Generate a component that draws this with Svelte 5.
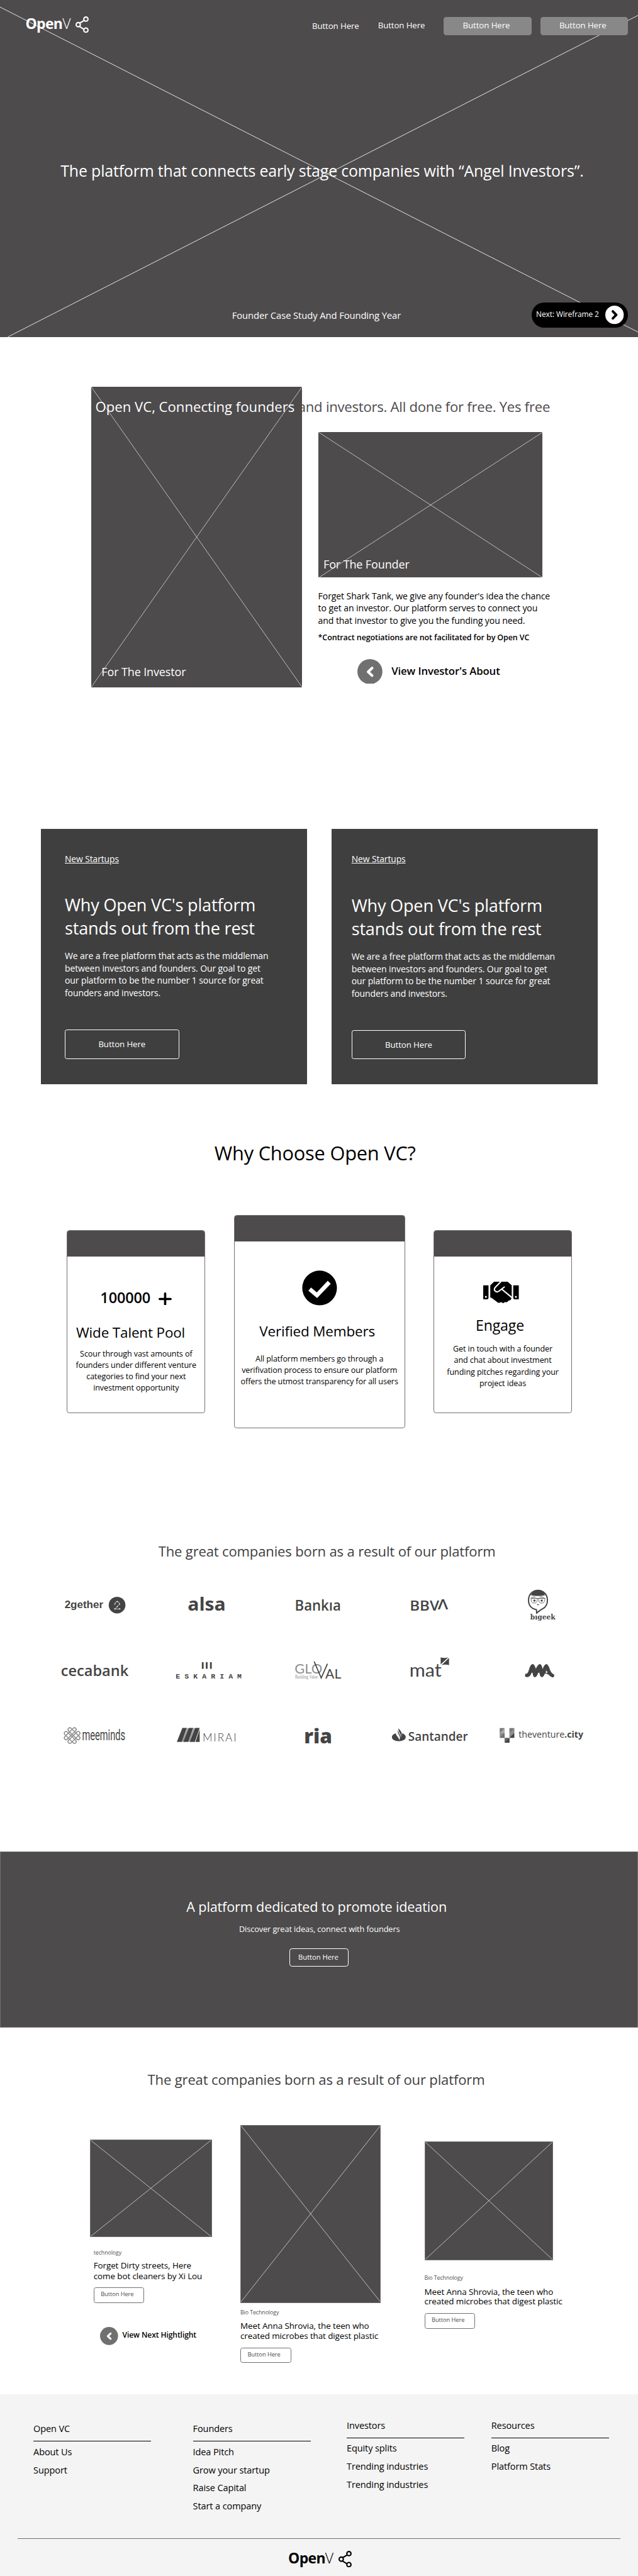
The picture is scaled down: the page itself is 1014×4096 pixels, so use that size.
<script>
  const pitch = [
    'We are a free platform that acts as the middleman',
    'between investors and founders. Our goal to get',
    'our platform to be the number 1 source for great',
    'founders and investors.'
  ];

  const stories = [
    {
      tag: 'technology',
      title: ['Forget Dirty streets, Here', 'come bot cleaners by Xi Lou'],
      kind: 'story-a',
      next: true
    },
    {
      tag: 'Bio Technology',
      title: ['Meet Anna Shrovia, the teen who', 'created microbes that digest plastic'],
      kind: 'story-b'
    },
    {
      tag: 'Bio Technology',
      title: ['Meet Anna Shrovia, the teen who', 'created microbes that digest plastic'],
      kind: 'story-c'
    }
  ];

  const footerColumns = [
    { head: 'Open VC', items: ['About Us', 'Support'] },
    { head: 'Founders', items: ['Idea Pitch', 'Grow your startup', 'Raise Capital', 'Start a company'] },
    { head: 'Investors', items: ['Equity splits', 'Trending industries', 'Trending industries'] },
    { head: 'Resources', items: ['Blog', 'Platform Stats'] }
  ];
</script>

{#snippet brand()}
  <div class="brand">
    <span class="brand-name"><b>Open</b>V</span>
    <svg class="brand-icon" viewBox="0 0 30 38">
      <g fill="none" stroke="currentColor" stroke-width="3">
        <circle cx="23.7" cy="6.4" r="4.8" />
        <circle cx="23.7" cy="31.4" r="4.8" />
        <circle cx="6.2" cy="19" r="4.8" />
        <path d="M9.6 15.4 19.6 9.6M9 23l10.4 6.6" />
      </g>
    </svg>
  </div>
{/snippet}

{#snippet cross()}
  <svg class="cross" viewBox="0 0 100 100" preserveAspectRatio="none">
    <path d="M0 0 100 100M100 0 0 100" />
  </svg>
{/snippet}

{#snippet back()}
  <svg class="back" viewBox="0 0 57 57">
    <circle cx="28.5" cy="28.5" r="28.5" fill="#707070" />
    <path d="M33.5 20.5 24.5 29l9 8.5" fill="none" stroke="#fff" stroke-width="6" stroke-linecap="round" stroke-linejoin="round" />
  </svg>
{/snippet}

<div class="page">
  <section class="hero">
    <svg class="hero-cross" viewBox="0 0 1452 767">
      <path d="M0 16 1452 756M1452 35 18 767" />
    </svg>
    <header>
      {@render brand()}
      <nav>
        <a class="link low">Button Here</a>
        <a class="link">Button Here</a>
        <a class="solid">Button Here</a>
        <a class="solid">Button Here</a>
      </nav>
    </header>
    <h1>The platform that connects early stage companies with “Angel Investors”.</h1>
    <div class="hero-foot">
      <p>Founder Case Study And Founding Year</p>
      <a class="pill">
        <span>Next: Wireframe 2</span>
        <svg viewBox="0 0 42 42">
          <circle cx="21" cy="21" r="21" fill="#fff" />
          <path d="M17.2 13 25 21l-7.8 8" fill="none" stroke="#000" stroke-width="5.6" stroke-linecap="round" stroke-linejoin="round" />
        </svg>
      </a>
    </div>
  </section>

  <section class="about">
    <div class="photo tall">
      {@render cross()}
      <h2><span>Open VC, Connecting founders</span> and investors. All done for free. Yes free</h2>
      <p>For The Investor</p>
    </div>
    <div class="founder">
      <div class="photo wide">
        {@render cross()}
        <p>For The Founder</p>
      </div>
      <p class="copy">Forget Shark Tank, we give any founder's idea the chance<br />to get an investor. Our platform serves to connect you<br />and that investor to give you the funding you need.</p>
      <p class="note">*Contract negotiations are not facilitated for by Open VC</p>
      <a class="go">{@render back()}<span>View Investor's About</span></a>
    </div>
  </section>

  <section class="startups">
    {#each ['left', 'right'] as side}
      <article class={side}>
        <a class="kicker">New Startups</a>
        <h3>Why Open VC's platform<br />stands out from the rest</h3>
        <p>{#each pitch as line}<span>{line}</span>{/each}</p>
        <a class="outline">Button Here</a>
      </article>
    {/each}
  </section>

  <section class="why">
    <h2>Why Choose Open VC?</h2>
    <div class="reasons">
      <article class="reason talent">
        <div class="bar"></div>
        <div class="count">
          <b>100000</b>
          <svg viewBox="0 0 30 30"><path d="M15 2.6v24.8M2.6 15h24.8" stroke="#000" stroke-width="5.2" stroke-linecap="round" /></svg>
        </div>
        <h3>Wide Talent Pool</h3>
        <p>Scour through vast amounts of<br />founders under different venture<br />categories to find your next<br />investment opportunity</p>
      </article>
      <article class="reason verified">
        <div class="bar"></div>
        <svg class="check" viewBox="0 0 80 80">
          <circle cx="40" cy="40" r="39.5" />
          <path d="M17.5 42.5 34 56.5 62 27" fill="none" stroke="#fff" stroke-width="9.5" />
        </svg>
        <h3>Verified Members</h3>
        <p>All platform members go through a<br />verifivation process to ensure our platform<br />offers the utmost transparency for all users</p>
      </article>
      <article class="reason engage">
        <div class="bar"></div>
        <svg class="shake" viewBox="0 0 242 146">
          <path d="M0 24h36v84q0 12-12 12H0zM206 24h36v96h-26q-12 0-12-12V26z" />
          <path d="M48 24 74 0h92l28 24v84q-6 22-22 20-8 16-26 10-8 14-24 0-10 8-22 4L60 112q-4-4-12-4z" />
          <path d="M122-3 82 38q-11 14-2 24 14 13 30 0l33-26M127 51l66 55" fill="none" stroke="#fff" stroke-width="9" stroke-linecap="round" stroke-linejoin="round" />
          <g fill="#fff"><circle cx="18" cy="103" r="6.5" /><circle cx="222" cy="103" r="6.5" /></g>
        </svg>
        <h3>Engage</h3>
        <p>Get in touch with a founder<br />and chat about investment<br />funding pitches regarding your<br />project ideas</p>
      </article>
    </div>
  </section>

  <section class="companies">
    <h2>The great companies born as a result of our platform</h2>
    <div class="logos">
      <!-- 2gether -->
      <svg viewBox="0 0 220 100">
        <text class="helv" x="41" y="56" font-size="24" font-weight="700" textLength="88" lengthAdjust="spacingAndGlyphs">2gether</text>
        <circle cx="160.5" cy="49" r="19" />
        <path d="M155.500 46.500 157 42.500l3.700-1.700 4 1.700 1.500 4.200-5.200 5.600-5.500 5.400h11" fill="none" stroke="#ddd" stroke-width="1.2" />
        <g fill="#fff"><circle cx="155.500" cy="46.500" r="1.3" /><circle cx="160.700" cy="40.800" r="1.3" /><circle cx="166.200" cy="46.700" r="1.3" /><circle cx="161" cy="52.300" r="1.3" /><circle cx="155.500" cy="57.700" r="1.5" /><circle cx="166.500" cy="57.700" r="1.5" /></g>
      </svg>
      <!-- alsa -->
      <svg viewBox="0 0 220 100">
        <text x="67.5" y="61.5" font-size="42" font-weight="700" textLength="87" lengthAdjust="spacingAndGlyphs">alsa</text>
      </svg>
      <!-- Bankia -->
      <svg viewBox="0 0 220 100">
        <text x="59.5" y="61" font-size="33" font-weight="600" textLength="105" lengthAdjust="spacingAndGlyphs">Bankıa</text>
      </svg>
      <!-- BBVA -->
      <svg viewBox="0 0 220 100">
        <text x="67.5" y="61.5" font-size="30" font-weight="600" textLength="67" lengthAdjust="spacingAndGlyphs">BBV</text>
        <text x="131.5" y="59" font-size="30" font-weight="600" textLength="23.5" lengthAdjust="spacingAndGlyphs">Λ</text>
      </svg>
      <!-- bigeek -->
      <svg viewBox="0 0 220 100">
        <path d="M102.500 59.500C91 57 84.500 49 84.500 38c0-13 9-22.500 21.500-22.500S127.500 25 127.500 38c0 9-4 16-11 19.500-5 2.500-8 5-13.500 9.500z" fill="#fff" stroke="#444" stroke-width="2.8" />
        <path d="M90 26.500q3-11 16-11t16 11q-16 3.500-32 0z" />
        <g fill="none" stroke="#444" stroke-width="1.1">
          <path d="M90 33.500h14.500v4q-1 7-7 7-6.500 0-7-7zM107.500 33.500H122l-.5 4q-1 7-7 7-6 0-7-7zM91 31.500q5-2 9-1M110 30q5 0 9 1.500M90 33.500h32" />
        </g>
        <circle cx="98" cy="38.500" r="2.5" /><circle cx="114.500" cy="38.500" r="2.5" />
        <path d="M103 46.500q3 1.500 6 0-1 3-3 3t-3-3z" />
        <text class="slab" x="88.5" y="81" font-size="16.5" font-weight="700" textLength="57" lengthAdjust="spacingAndGlyphs">bıgeek</text>
      </svg>
      <!-- cecabank -->
      <svg viewBox="0 0 220 100">
        <text x="32.5" y="61" font-size="33" font-weight="600" textLength="154" lengthAdjust="spacingAndGlyphs">cecabank</text>
      </svg>
      <!-- Eskariam -->
      <svg viewBox="0 0 220 100">
        <path d="M100 30h4v15h-4zM109 30h4v15h-4zM118.500 30h4v15h-4z" />
        <text class="mono" x="40.5" y="68" font-size="16.5" font-weight="700" textLength="150">ESKARIAM</text>
      </svg>
      <!-- Gloval -->
      <svg viewBox="0 0 220 100">
        <text class="lato soft" x="59" y="56" font-size="31" textLength="63" lengthAdjust="spacingAndGlyphs">GLO</text>
        <path d="M104 29.500 119.600 66 133.400 34.500" fill="none" stroke="#444" stroke-width="2.5" stroke-linecap="round" />
        <text class="lato" x="129" y="66.7" font-size="29" textLength="36" lengthAdjust="spacingAndGlyphs">AL</text>
        <text class="serif soft" x="60" y="67.5" font-size="10.5" textLength="52" lengthAdjust="spacingAndGlyphs">Building Value</text>
      </svg>
      <!-- mat -->
      <svg viewBox="0 0 220 100">
        <text class="lato" x="67" y="62.5" font-size="41" textLength="73" lengthAdjust="spacingAndGlyphs">mat</text>
        <path d="M138 19q9 3 17.500 0L138 35zM157 20.500V37q-8-3-17 0z" />
      </svg>
      <!-- MA -->
      <svg viewBox="0 0 220 100">
        <path d="M80.500 60c9 0 8-18 13.500-21.500C98 41 97 57 99 60c4-2 6-19 11-21.500 4 4 2 19 5 21.500 4-2 5-19 10-21.500 5 5 3 17 14 22M118 52q8-1 14 3" fill="none" stroke="#444" stroke-width="8" stroke-linecap="round" stroke-linejoin="round" />
        <path d="M101 42l5 4-5 8zM90 48h12v6H90zM105 48h12v6h-12z" />
        <ellipse cx="125.500" cy="52.500" rx="1.8" ry="2.5" fill="#fff" />
      </svg>
      <!-- meeminds -->
      <svg viewBox="0 0 220 100">
        <g class="knot" transform="translate(58.2 48.2) rotate(45)">
          <rect x="-17.500" y="-10" width="35" height="8" rx="4" />
          <rect x="-17.500" y="2" width="35" height="8" rx="4" />
          <rect x="-10" y="-17.500" width="8" height="35" rx="4" />
          <rect x="2" y="-17.500" width="8" height="35" rx="4" />
        </g>
        <text class="roboto" x="81" y="58.7" font-size="35" textLength="98" lengthAdjust="spacingAndGlyphs">meeminds</text>
      </svg>
      <!-- Mirai -->
      <svg viewBox="0 0 220 100">
        <path d="M55.600 30.700H66L54.500 62.700H43zM70 30.700H80.500L69 62.700H57.500zM84.500 30.700H95L84 62.700H72zM95 34v28.700h-9.500z" />
        <path d="M68 31.500 56.300 62M82.500 31.500 70.600 62" stroke="#444" stroke-width="1.3" />
        <text class="lato" x="101.5" y="61" font-size="24.5" font-weight="300" textLength="77">MIRAI</text>
      </svg>
      <!-- ria -->
      <svg viewBox="0 0 220 100">
        <text x="80.5" y="66" font-size="46" font-weight="800" textLength="64" lengthAdjust="spacingAndGlyphs">ria</text>
      </svg>
      <!-- Santander -->
      <svg viewBox="0 0 220 100">
        <path d="M36 43c-6 2-9 5-9 9 0 5.500 7 9 15.700 9S58.500 57.500 58.500 52c0-4-3-7.500-8.500-9 0 4-1 6-2.500 9-1-5-6-11-6.500-15.500-2 4 1 8 3 12 2 4 1.500 7 0 10-1.500-6-8-11-8-15.500z" />
        <path d="M42.500 31c-1.500 4 0 7 2 10.500s3.500 6 2.500 10.500c3-5 3-9 1-12.500S43 34 42.500 31z" />
        <text x="64" y="60" font-size="29" font-weight="600" textLength="136" lengthAdjust="spacingAndGlyphs">Santander</text>
      </svg>
      <!-- theventure.city -->
      <svg viewBox="0 0 220 100">
        <path d="M19 31h11v11.200H19zM41 31h11v11.200H41z" fill="#777" />
        <path d="M19 42.200h11v11.200H19zM41 42.200h11v11.200H41z" fill="#8a8a8a" />
        <path d="M30 31v11.200H19z" fill="#aaa" />
        <path d="M30 42.200v11.200H19z" fill="#707070" />
        <path d="M52 31v11.200H41z" fill="#8c8c8c" />
        <path d="M52 42.200v11.200H41z" fill="#444" />
        <path d="M30 53.400h11v11.200H30z" fill="#666" />
        <path d="M41 53.400v11.200H30z" fill="#444" />
        <text x="62" y="53.7" font-size="20" textLength="147" lengthAdjust="spacingAndGlyphs">theventure<tspan font-weight="700">.city</tspan></text>
      </svg>
    </div>
  </section>

  <section class="band">
    <h2>A platform dedicated to promote ideation</h2>
    <p>Discover great ideas, connect with founders</p>
    <a>Button Here</a>
  </section>

  <section class="highlights">
    <h2>The great companies born as a result of our platform</h2>
    <div class="stories">
      {#each stories as story}
        <article class={story.kind}>
          <div class="photo framed">{@render cross()}</div>
          <div class="text">
            <span class="tag">{story.tag}</span>
            <h3>{story.title[0]}<br />{story.title[1]}</h3>
            <a class="small">Button Here</a>
          </div>
          {#if story.next}
            <a class="go mini">{@render back()}<span>View Next Hightlight</span></a>
          {/if}
        </article>
      {/each}
    </div>
  </section>

  <footer>
    <div class="columns">
      {#each footerColumns as column, i}
        <div class="column" class:raised={i > 1}>
          <h4>{column.head}</h4>
          <ul>
            {#each column.items as item}<li>{item}</li>{/each}
          </ul>
        </div>
      {/each}
    </div>
    <div class="sign">{@render brand()}</div>
  </footer>
</div>

<style>
  /* 1rem is one design unit: the layout is 1452 units wide */
  :global(html) {
    font-size: 0.69838px;
  }
  :global(body) {
    background: #fff;
    overflow-x: hidden;
  }
  .page {
    width: 1452rem;
    height: 5865rem;
    font-family: 'Open Sans', 'Noto Sans', sans-serif;
    font-size: 20rem;
    color: #000;
    background: #fff;
    overflow: hidden;
  }
  .page * {
    box-sizing: border-box;
    letter-spacing: -0.007em;
  }
  h1, h2, h3, h4, p, ul {
    margin: 0;
    padding: 0;
    font-weight: 400;
    white-space: nowrap;
  }
  ul {
    list-style: none;
  }
  a {
    white-space: nowrap;
  }
  svg {
    display: block;
    flex: none;
  }

  .brand {
    display: flex;
    gap: 7rem;
  }
  .brand-name {
    width: 107rem;
    font-size: 32.9rem;
    line-height: 34rem;
    font-weight: 300;
  }
  .brand .brand-name b {
    font-weight: 700;
    letter-spacing: -0.03em;
  }
  .brand-icon {
    width: 30rem;
    height: 38rem;
  }

  .hero {
    position: relative;
    height: 767rem;
    background: #4d4b4c;
    color: #fff;
    overflow: hidden;
  }
  .hero-cross {
    position: absolute;
    inset: 0;
    width: 100%;
    height: 100%;
  }
  .hero-cross path {
    fill: none;
    stroke: #e8e8e8;
    stroke-width: 1.4;
  }
  header {
    position: relative;
    display: flex;
    justify-content: space-between;
    height: 80rem;
    padding: 37rem 23rem 0 58rem;
  }
  nav {
    display: flex;
    padding-top: 2rem;
    font-size: 19rem;
  }
  .link {
    width: 107rem;
    margin-right: 43rem;
    line-height: 39rem;
  }
  .link.low {
    line-height: 41rem;
  }
  .solid {
    width: 199.5rem;
    height: 41rem;
    padding-right: 6rem;
    border-radius: 6rem;
    background: #888;
    line-height: 39rem;
    text-align: center;
  }
  .solid + .solid {
    margin-left: 20rem;
  }
  h1 {
    position: relative;
    margin-top: 285rem;
    padding-left: 14rem;
    font-size: 35.7rem;
    line-height: 48rem;
    text-align: center;
  }
  .hero-foot {
    position: relative;
    display: flex;
    justify-content: space-between;
    margin: 276rem 23rem 0 528rem;
  }
  .hero-foot p {
    padding-top: 14rem;
    font-size: 21.2rem;
    line-height: 30rem;
  }
  .pill {
    display: flex;
    justify-content: space-between;
    width: 219rem;
    height: 57rem;
    padding: 0 9rem 0 10rem;
    border-radius: 28.5rem;
    background: #000;
    font-size: 17.1rem;
    line-height: 53rem;
  }
  .pill svg {
    width: 42rem;
    height: 42rem;
    margin-top: 7.5rem;
  }

  .photo {
    position: relative;
    background: #4d4b4c;
    color: #fff;
  }
  .cross {
    position: absolute;
    inset: 0;
    width: 100%;
    height: 100%;
  }
  .cross path {
    fill: none;
    stroke: #e6e6e6;
    stroke-width: 0.75px;
    vector-effect: non-scaling-stroke;
  }

  .about {
    display: flex;
    gap: 36rem;
    height: 1120rem;
    padding: 114rem 0 0 208rem;
  }
  .tall,
  .wide {
    display: flex;
    align-items: flex-end;
    font-size: 25.8rem;
    line-height: 36rem;
  }
  .tall p,
  .wide p {
    position: relative;
  }
  .tall {
    width: 480rem;
    height: 684rem;
    padding: 0 0 16.5rem 23rem;
  }
  .wide {
    width: 511rem;
    height: 332rem;
    padding: 0 0 12rem 12rem;
  }
  .tall h2 {
    position: absolute;
    top: 23rem;
    left: 9rem;
    z-index: 1;
    font-size: 31.7rem;
    line-height: 44rem;
    letter-spacing: -0.0115em;
    color: #4d4b4c;
  }
  .tall h2 span {
    letter-spacing: 0;
    color: #fff;
  }
  .founder {
    padding-top: 102rem;
  }
  .copy {
    margin-top: 28rem;
    font-size: 20.15rem;
    line-height: 28rem;
  }
  .note {
    margin-top: 14rem;
    font-size: 17.85rem;
    line-height: 24rem;
    font-weight: 600;
  }
  .go {
    display: flex;
    gap: 20rem;
    margin: 35rem 0 0 90rem;
    font-size: 24rem;
    line-height: 53rem;
    font-weight: 600;
  }
  .back {
    width: 57rem;
    height: 57rem;
  }

  .startups {
    display: flex;
    gap: 55rem;
    padding-left: 93rem;
  }
  .startups article {
    display: flex;
    flex-direction: column;
    align-items: flex-start;
    width: 606rem;
    height: 581rem;
    background: #3f3f3f;
    color: #fff;
  }
  .left {
    padding: 54.3rem 0 0 54.5rem;
  }
  .right {
    padding: 55.3rem 0 0 46rem;
  }
  .kicker {
    font-size: 19.9rem;
    line-height: 28rem;
    text-decoration: underline;
    text-underline-offset: 2rem;
  }
  .startups h3 {
    margin-top: 64.7rem;
    font-size: 38.8rem;
    line-height: 53rem;
  }
  .startups p {
    margin-top: 22.7rem;
    font-size: 20.05rem;
    line-height: 28rem;
  }
  .startups p span {
    display: block;
  }
  .outline {
    width: 260rem;
    height: 67rem;
    margin-top: 69.3rem;
    border: 1.5rem solid #fff;
    border-radius: 5rem;
    font-size: 19rem;
    line-height: 64rem;
    text-align: center;
  }

  .why {
    height: 1032rem;
    padding-top: 128.5rem;
  }
  .why h2 {
    padding-right: 18rem;
    font-size: 44.1rem;
    line-height: 60rem;
    text-align: center;
  }
  .reasons {
    display: flex;
    align-items: center;
    gap: 65rem;
    margin: 110.5rem 0 0 152rem;
  }
  .reason {
    display: flex;
    flex-direction: column;
    align-items: center;
    width: 315.5rem;
    height: 416rem;
    border: 1rem solid #707070;
    border-radius: 6rem;
    overflow: hidden;
    text-align: center;
  }
  .verified {
    width: 389rem;
    height: 485rem;
  }
  .bar {
    flex: none;
    width: 100%;
    height: 58rem;
    background: #4d4b4c;
  }
  .reason h3 {
    font-size: 32.2rem;
    line-height: 44rem;
  }
  .reason p {
    font-size: 18rem;
    line-height: 26rem;
  }
  .count {
    display: flex;
    gap: 19rem;
    margin-top: 74rem;
    font-size: 33.7rem;
    line-height: 40rem;
  }
  .count b {
    font-weight: 600;
  }
  .count svg {
    width: 30rem;
    height: 30rem;
    margin-top: 7rem;
  }
  .talent h3 {
    margin-top: 38rem;
    padding-right: 25rem;
  }
  .talent p {
    margin-top: 13rem;
  }
  .check {
    width: 80rem;
    height: 80rem;
    margin-top: 66.5rem;
  }
  .verified h3 {
    margin-top: 37rem;
    padding-right: 10rem;
  }
  .verified p {
    margin-top: 27.5rem;
  }
  .shake {
    width: 81rem;
    height: 49rem;
    margin: 57.5rem 7rem 0 0;
  }
  .engage h3 {
    margin-top: 27.5rem;
    padding-right: 13rem;
    font-size: 33.1rem;
  }
  .engage p {
    margin-top: 20rem;
  }

  .companies {
    height: 716rem;
    padding-top: 9.8rem;
  }
  .companies h2,
  .highlights h2 {
    font-size: 31.6rem;
    line-height: 44rem;
    text-align: center;
    color: #404040;
  }
  .companies h2 {
    padding-left: 36rem;
  }
  .logos {
    display: grid;
    grid-template-columns: repeat(5, 253rem);
    grid-auto-rows: 149rem;
    place-items: center;
    margin: 26.7rem 0 0 89.5rem;
  }
  .logos svg {
    width: 220rem;
    height: 100rem;
    overflow: visible;
    fill: #444;
  }
  .logos text,
  .logos tspan {
    letter-spacing: 0;
  }
  .logos .knot {
    fill: none;
    stroke: #8e8e8e;
    stroke-width: 2.2;
  }
  .helv {
    font-family: 'Liberation Sans', sans-serif;
  }
  .slab {
    font-family: 'DejaVu Serif', serif;
  }
  .mono {
    font-family: 'Liberation Mono', monospace;
  }
  .lato {
    font-family: Lato, sans-serif;
  }
  .roboto {
    font-family: Roboto, sans-serif;
  }
  .serif {
    font-family: 'Liberation Serif', serif;
  }
  .soft {
    fill: #8f8f8f;
  }

  .band {
    display: flex;
    flex-direction: column;
    align-items: center;
    height: 401rem;
    padding-top: 102rem;
    border: 1rem solid #707070;
    background: #4d4b4c;
    color: #fff;
  }
  .band h2 {
    padding-right: 11rem;
    font-size: 31rem;
    line-height: 44rem;
  }
  .band p {
    margin-top: 16rem;
    padding-left: 2rem;
    font-size: 18.25rem;
    line-height: 26rem;
  }
  .band a {
    width: 135rem;
    height: 41rem;
    margin-top: 30.6rem;
    padding-right: 3rem;
    border: 2rem solid #fff;
    border-radius: 6rem;
    font-size: 16.2rem;
    line-height: 37rem;
    text-align: center;
  }

  .highlights {
    height: 834rem;
    padding-top: 95.5rem;
  }
  .highlights h2 {
    padding-right: 13rem;
  }
  .stories {
    display: flex;
    align-items: flex-start;
    margin: 82.5rem 0 0 205rem;
  }
  .framed {
    border: 1rem solid #707070;
  }
  .text {
    display: flex;
    flex-direction: column;
    align-items: flex-start;
  }
  .tag {
    font-size: 12.6rem;
    line-height: 18rem;
    color: #505050;
  }
  .stories h3 {
    margin-top: 11.5rem;
    font-size: 19.25rem;
    line-height: 22rem;
  }
  .small {
    width: 115.5rem;
    height: 35rem;
    margin-top: 15.5rem;
    padding-left: 15rem;
    border: 2rem solid #707070;
    border-radius: 5rem;
    font-size: 13.3rem;
    line-height: 30rem;
    color: #4d4b4c;
  }
  .story-a {
    width: 277rem;
    margin: 33rem 65rem 0 0;
  }
  .story-a .framed {
    height: 222rem;
  }
  .story-a .text {
    padding: 27rem 0 0 8rem;
  }
  .story-a h3 {
    margin-top: 8rem;
    line-height: 24rem;
  }
  .story-a .small {
    margin-top: 13rem;
  }
  .story-b {
    width: 320rem;
    margin-right: 99rem;
  }
  .story-b .framed {
    height: 404rem;
  }
  .story-b .text {
    padding-top: 13rem;
  }
  .story-c {
    width: 292rem;
    margin-top: 37rem;
  }
  .story-c .framed {
    height: 270rem;
  }
  .story-c .text {
    padding-top: 32rem;
  }
  .go.mini {
    gap: 9.5rem;
    margin: 55rem 0 0 23rem;
    font-size: 17.3rem;
    line-height: 38.6rem;
  }
  .mini .back {
    width: 41rem;
    height: 41rem;
  }

  footer {
    height: 414rem;
    background: #f4f4f4;
    font-size: 20.8rem;
  }
  .columns {
    display: grid;
    grid-template-columns: 363rem 350rem 329rem 268rem;
    height: 328rem;
    padding: 65rem 0 0 76rem;
  }
  .column {
    width: 268rem;
  }
  .raised {
    margin-top: -8rem;
  }
  .column h4 {
    height: 43rem;
    border-bottom: 2rem solid #000;
    line-height: 28rem;
  }
  .column ul {
    padding-top: 2.5rem;
    line-height: 41rem;
  }
  .sign {
    display: flex;
    margin: 0 40rem;
    padding: 27rem 0 0 616rem;
    border-top: 2rem solid #707070;
  }
</style>
